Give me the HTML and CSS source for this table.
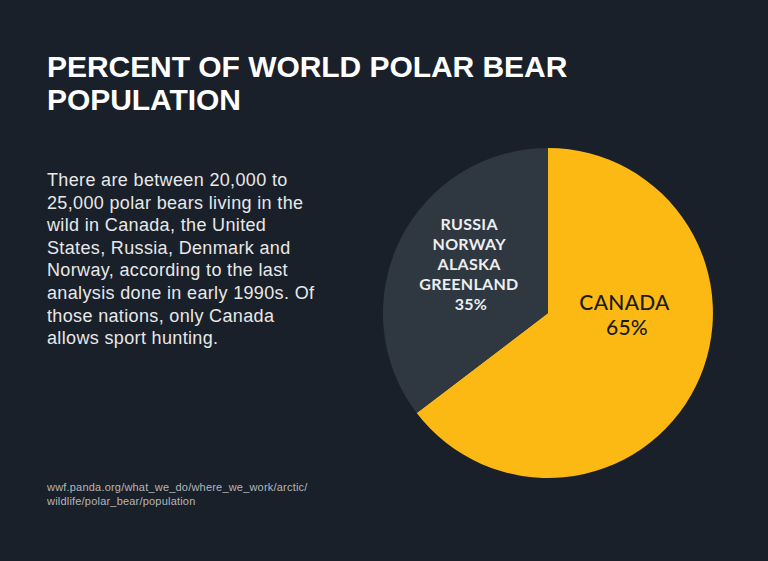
FILE: index.html
```html
<!DOCTYPE html>
<html lang="en">
<head>
<meta charset="utf-8">
<title>Percent of World Polar Bear Population</title>
<link rel="stylesheet" href="styles.css">
</head>
<body>
<main class="slide">
  <h1 class="title">PERCENT OF WORLD POLAR BEAR<br>POPULATION</h1>
  <div class="content">
    <div class="left">
      <p class="body-text">There are between 20,000 to 25,000 polar bears living in the wild in Canada, the United States, Russia, Denmark and Norway, according to the last analysis done in early 1990s. Of those nations, only Canada allows sport hunting.</p>
      <p class="source">wwf.panda.org/what_we_do/where_we_work/arctic/<br>wildlife/polar_bear/population</p>
    </div>
    <div class="chart">
      <svg class="pie" width="330" height="330" viewBox="0 0 330 330">
        <path class="slice-canada" d="M165,165 L165,0 A165,165 0 1,1 33.7,265 Z"/>
        <path class="slice-other" d="M165,165 L33.7,265 A165,165 0 0,1 165,0 Z"/>
        <text class="label-other" text-anchor="middle">
          <tspan x="88" y="82">RUSSIA</tspan>
          <tspan x="88" y="102">NORWAY</tspan>
          <tspan x="88" y="122">ALASKA</tspan>
          <tspan x="88" y="142">GREENLAND</tspan>
          <tspan x="88" y="162">35%</tspan>
        </text>
        <text class="label-canada" text-anchor="middle">
          <tspan x="244" y="162">CANADA</tspan>
          <tspan x="244" y="187">65%</tspan>
        </text>
      </svg>
    </div>
  </div>
</main>
</body>
</html>
```
FILE: styles.css
```css
html, body {
  margin: 0;
  padding: 0;
  background: #19202a;
}
.slide {
  width: 768px;
  height: 561px;
  box-sizing: border-box;
  padding: 50px 0 0 47px;
  font-family: "Liberation Sans", Arial, sans-serif;
}
.title {
  margin: 0;
  font-size: 30px;
  line-height: 33px;
  font-weight: 700;
  color: #ffffff;
  letter-spacing: -0.05px;
}
.content {
  display: flex;
  margin-top: 32px;
}
.left {
  width: 336px;
  display: flex;
  flex-direction: column;
}
.body-text {
  margin: 21px 0 0 0;
  width: 274px;
  font-size: 18px;
  line-height: 22.6px;
  letter-spacing: 0.35px;
  color: #e8e8e8;
}
.source {
  margin: 130px 0 0 0;
  font-size: 11px;
  line-height: 14px;
  letter-spacing: 0.2px;
  color: #b4b6b9;
}
.chart {
  width: 330px;
  height: 330px;
}
.pie {
  display: block;
}
.slice-canada {
  fill: #fdb913;
}
.slice-other {
  fill: #2f3841;
}
.label-other {
  font-family: Lato, "Noto Sans", sans-serif;
  font-size: 16px;
  font-weight: 700;
  letter-spacing: 0.3px;
  fill: #eceef0;
}
.label-canada {
  font-family: Lato, "Noto Sans", sans-serif;
  font-size: 21px;
  font-weight: 500;
  letter-spacing: 0.3px;
  fill: #1a1a1a;
}
```
